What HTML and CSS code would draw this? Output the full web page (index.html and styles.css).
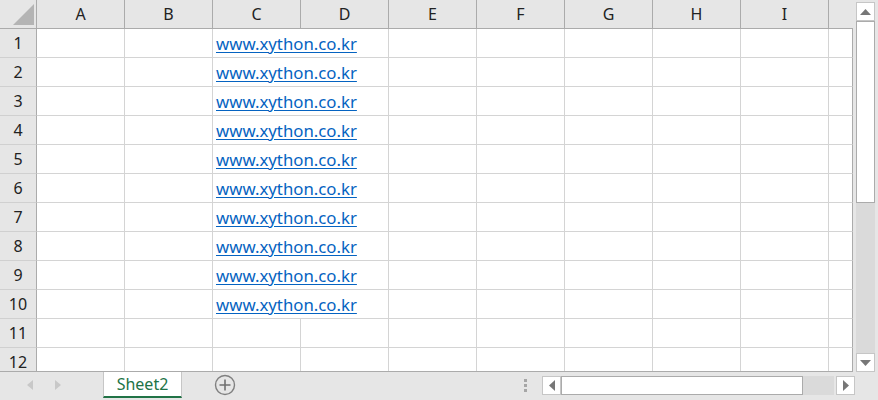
FILE: index.html
```html
<!DOCTYPE html>
<html lang="ko">
<head>
    <meta charset="UTF-8">
    <meta name="viewport" content="width=device-width, initial-scale=1.0">
    <title>Sheet2</title>
    <link rel="stylesheet" href="styles.css">
</head>
<body>
    <div class="app">
        <div class="main">
            <div class="sheet">
                <div class="row head">
                    <div class="corner"><svg width="21" height="21" viewBox="0 0 21 21"><polygon points="21,0 21,21 0,21" fill="#b4b4b4"/></svg></div>
                    <div class="ch">A</div><div class="ch">B</div><div class="ch">C</div><div class="ch">D</div><div class="ch">E</div>
                    <div class="ch">F</div><div class="ch">G</div><div class="ch">H</div><div class="ch">I</div><div class="ch last"></div>
                </div>
                <div class="row"><div class="rh">1</div><div class="c"></div><div class="c"></div><div class="c wide"><a href="#">www.xython.co.kr</a></div><div class="c"></div><div class="c"></div><div class="c"></div><div class="c"></div><div class="c"></div><div class="c last"></div></div>
                <div class="row"><div class="rh">2</div><div class="c"></div><div class="c"></div><div class="c wide"><a href="#">www.xython.co.kr</a></div><div class="c"></div><div class="c"></div><div class="c"></div><div class="c"></div><div class="c"></div><div class="c last"></div></div>
                <div class="row"><div class="rh">3</div><div class="c"></div><div class="c"></div><div class="c wide"><a href="#">www.xython.co.kr</a></div><div class="c"></div><div class="c"></div><div class="c"></div><div class="c"></div><div class="c"></div><div class="c last"></div></div>
                <div class="row"><div class="rh">4</div><div class="c"></div><div class="c"></div><div class="c wide"><a href="#">www.xython.co.kr</a></div><div class="c"></div><div class="c"></div><div class="c"></div><div class="c"></div><div class="c"></div><div class="c last"></div></div>
                <div class="row"><div class="rh">5</div><div class="c"></div><div class="c"></div><div class="c wide"><a href="#">www.xython.co.kr</a></div><div class="c"></div><div class="c"></div><div class="c"></div><div class="c"></div><div class="c"></div><div class="c last"></div></div>
                <div class="row"><div class="rh">6</div><div class="c"></div><div class="c"></div><div class="c wide"><a href="#">www.xython.co.kr</a></div><div class="c"></div><div class="c"></div><div class="c"></div><div class="c"></div><div class="c"></div><div class="c last"></div></div>
                <div class="row"><div class="rh">7</div><div class="c"></div><div class="c"></div><div class="c wide"><a href="#">www.xython.co.kr</a></div><div class="c"></div><div class="c"></div><div class="c"></div><div class="c"></div><div class="c"></div><div class="c last"></div></div>
                <div class="row"><div class="rh">8</div><div class="c"></div><div class="c"></div><div class="c wide"><a href="#">www.xython.co.kr</a></div><div class="c"></div><div class="c"></div><div class="c"></div><div class="c"></div><div class="c"></div><div class="c last"></div></div>
                <div class="row"><div class="rh">9</div><div class="c"></div><div class="c"></div><div class="c wide"><a href="#">www.xython.co.kr</a></div><div class="c"></div><div class="c"></div><div class="c"></div><div class="c"></div><div class="c"></div><div class="c last"></div></div>
                <div class="row"><div class="rh">10</div><div class="c"></div><div class="c"></div><div class="c wide"><a href="#">www.xython.co.kr</a></div><div class="c"></div><div class="c"></div><div class="c"></div><div class="c"></div><div class="c"></div><div class="c last"></div></div>
                <div class="row"><div class="rh">11</div><div class="c"></div><div class="c"></div><div class="c"></div><div class="c"></div><div class="c"></div><div class="c"></div><div class="c"></div><div class="c"></div><div class="c"></div><div class="c last"></div></div>
                <div class="row"><div class="rh">12</div><div class="c"></div><div class="c"></div><div class="c"></div><div class="c"></div><div class="c"></div><div class="c"></div><div class="c"></div><div class="c"></div><div class="c"></div><div class="c last"></div></div>
            </div>
            <div class="vscroll">
                <div class="sbtn"><svg width="11" height="6" viewBox="0 0 11 6"><polygon points="5.5,0 11,6 0,6" fill="#777"/></svg></div>
                <div class="vthumb"></div>
                <div class="vtrack"></div>
                <div class="sbtn"><svg width="11" height="6" viewBox="0 0 11 6"><polygon points="0,0 11,0 5.5,6" fill="#777"/></svg></div>
            </div>
        </div>
        <div class="tabbar">
            <div class="nav">
                <svg width="6" height="10" viewBox="0 0 6 10"><polygon points="6,0 6,10 0,5" fill="#c8c8c8"/></svg>
                <svg width="6" height="10" viewBox="0 0 6 10"><polygon points="0,0 6,5 0,10" fill="#c8c8c8"/></svg>
            </div>
            <div class="tab">Sheet2</div>
            <div class="add">
                <svg width="22" height="22" viewBox="0 0 22 22">
                    <circle cx="11" cy="11" r="9.5" fill="none" stroke="#808080" stroke-width="1.4"/>
                    <path d="M11 5.5V16.5M5.5 11H16.5" stroke="#707070" stroke-width="1.6"/>
                </svg>
            </div>
            <div class="dots"><span></span><span></span><span></span></div>
            <div class="hscroll">
                <div class="sbtn"><svg width="6" height="11" viewBox="0 0 6 11"><polygon points="6,0 6,11 0,5.5" fill="#777"/></svg></div>
                <div class="hthumb"></div>
                <div class="htrack"></div>
                <div class="sbtn right"><svg width="6" height="11" viewBox="0 0 6 11"><polygon points="0,0 6,5.5 0,11" fill="#777"/></svg></div>
            </div>
        </div>
    </div>
</body>
</html>
```

FILE: styles.css
```css
* {
    box-sizing: border-box;
}

body {
    margin: 0;
    font-family: "Noto Sans", "Noto Sans CJK KR", sans-serif;
    background: #e6e6e6;
}

.app {
    width: 878px;
    height: 400px;
    display: flex;
    flex-direction: column;
    overflow: hidden;
}

.main {
    display: flex;
    height: 372px;
}

.sheet {
    width: 853px;
    height: 372px;
    overflow: hidden;
    background: white;
    border-bottom: 1px solid #ababab;
}

.row {
    display: grid;
    grid-template-columns: 37px repeat(9, 88px) 24px;
    height: 29px;
}

.row > div {
    border-right: 1px solid #d4d4d4;
    border-bottom: 1px solid #d4d4d4;
}

.head > div {
    background: #e6e6e6;
    border-right-color: #ababab;
    border-bottom-color: #ababab;
}

.head > .last {
    border-right: none;
}

.row > .c.last {
    border-right-color: #ababab;
}

.corner {
    display: flex;
    justify-content: flex-end;
    align-items: flex-end;
    padding: 0 2px 3px 0;
}

.ch, .rh {
    display: flex;
    align-items: center;
    justify-content: center;
    font-size: 16px;
    color: #222;
}

.rh {
    background: #e6e6e6;
    border-right-color: #ababab !important;
    border-bottom-color: #d0d0d0 !important;
}

.wide {
    grid-column: span 2;
    display: flex;
    align-items: center;
    padding-left: 3px;
}

.wide a {
    color: #0563c1;
    font-size: 16.8px;
    text-decoration: underline;
    text-underline-offset: 2px;
}

.vscroll {
    width: 25px;
    padding: 2px 3px 0 3px;
    display: flex;
    flex-direction: column;
}

.sbtn {
    width: 19px;
    height: 19px;
    background: white;
    border: 1px solid #c6c6c6;
    display: flex;
    align-items: center;
    justify-content: center;
    flex-shrink: 0;
}

.vthumb {
    height: 182px;
    background: white;
    border: 1px solid #ababab;
}

.vtrack {
    height: 150px;
    background: #dadada;
}

.tabbar {
    height: 28px;
    display: flex;
    align-items: flex-start;
}

.nav {
    width: 103px;
    height: 26px;
    display: flex;
    align-items: center;
    padding-left: 27px;
    gap: 22px;
}

.tab {
    width: 79px;
    height: 26px;
    background: white;
    border-left: 1px solid #c6c6c6;
    border-right: 1px solid #c6c6c6;
    border-bottom: 2px solid #217346;
    color: #217346;
    font-size: 16px;
    display: flex;
    align-items: center;
    justify-content: center;
}

.add {
    margin-left: 32px;
    height: 26px;
    display: flex;
    align-items: center;
}

.dots {
    margin-left: 288px;
    margin-top: 7px;
    display: flex;
    flex-direction: column;
    gap: 2px;
}

.dots span {
    width: 3px;
    height: 3px;
    background: #a6a6a6;
}

.hscroll {
    margin-left: 15px;
    margin-top: 4px;
    display: flex;
}

.hthumb {
    width: 242px;
    height: 19px;
    background: white;
    border: 1px solid #ababab;
}

.htrack {
    width: 31px;
    height: 19px;
    background: #dadada;
}

.sbtn.right {
    margin-left: 2px;
}
```
